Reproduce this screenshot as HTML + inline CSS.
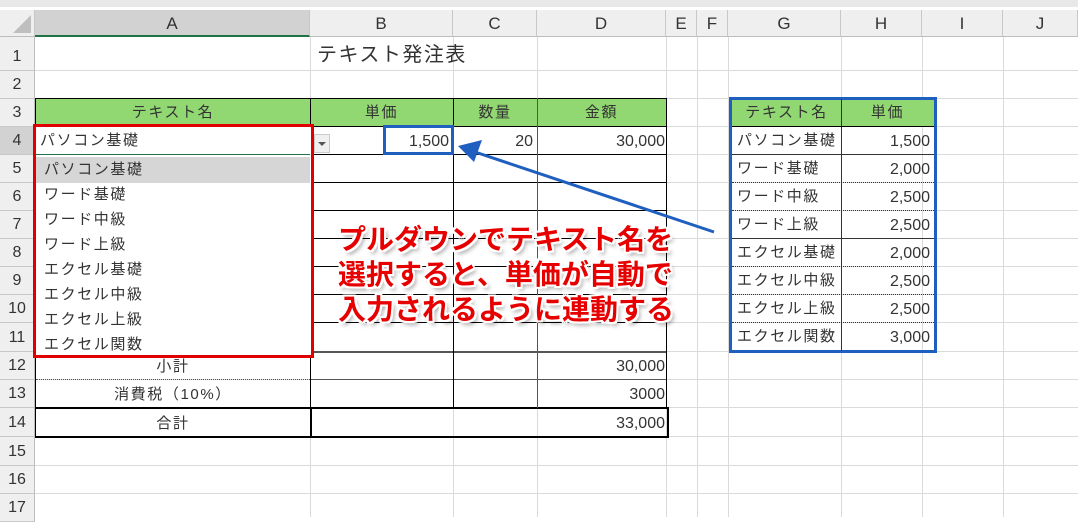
<!DOCTYPE html>
<html><head><meta charset="utf-8"><style>
*{margin:0;padding:0;box-sizing:border-box}
body{width:1078px;height:517px;overflow:hidden;background:#fff;position:relative;font-family:"Liberation Sans","Noto Sans CJK JP",sans-serif;color:#333}
.a{position:absolute}
.h{position:absolute;height:1px;background:#dadada}
.v{position:absolute;width:1px;background:#dadada}
.ch{position:absolute;top:10px;height:27px;background:#efefef;border-right:1px solid #c8c8c8;border-bottom:1px solid #bdbdbd;font-size:17px;color:#333;text-align:center;line-height:27px}
.rh{position:absolute;left:0;width:35px;background:#efefef;border-bottom:1px solid #c8c8c8;border-right:1px solid #bdbdbd;font-size:16px;text-align:center;color:#333}
.t{position:absolute;font-size:15px;line-height:20px;white-space:nowrap;color:#333}
.j{letter-spacing:1.6px}
.bk{position:absolute;background:#000}
.g{position:absolute;background:#92d872}
.it{position:absolute;left:44px;font-size:15px;line-height:20px;letter-spacing:1.6px;color:#333}
.call{position:absolute;left:338px;font-size:28px;font-weight:bold;color:#e60000;white-space:nowrap;
text-shadow:-2px -2px 0 #fff,2px -2px 0 #fff,-2px 2px 0 #fff,2px 2px 0 #fff,0 2px 0 #fff,0 -2px 0 #fff,2px 0 0 #fff,-2px 0 0 #fff,3px 4px 4px rgba(0,0,0,.35)}
</style></head><body>
<div class="a" style="left:0;top:0;width:1078px;height:7px;background:#e8e8e8"></div>
<div class="h" style="left:35px;top:70px;width:1043px"></div>
<div class="h" style="left:35px;top:98px;width:1043px"></div>
<div class="h" style="left:35px;top:126px;width:1043px"></div>
<div class="h" style="left:35px;top:154px;width:1043px"></div>
<div class="h" style="left:35px;top:182px;width:1043px"></div>
<div class="h" style="left:35px;top:210px;width:1043px"></div>
<div class="h" style="left:35px;top:238px;width:1043px"></div>
<div class="h" style="left:35px;top:266px;width:1043px"></div>
<div class="h" style="left:35px;top:294px;width:1043px"></div>
<div class="h" style="left:35px;top:322px;width:1043px"></div>
<div class="h" style="left:35px;top:351px;width:1043px"></div>
<div class="h" style="left:35px;top:379px;width:1043px"></div>
<div class="h" style="left:35px;top:407px;width:1043px"></div>
<div class="h" style="left:35px;top:436px;width:1043px"></div>
<div class="h" style="left:35px;top:465px;width:1043px"></div>
<div class="h" style="left:35px;top:493px;width:1043px"></div>
<div class="v" style="left:310px;top:37px;height:480px"></div>
<div class="v" style="left:453px;top:37px;height:480px"></div>
<div class="v" style="left:537px;top:37px;height:480px"></div>
<div class="v" style="left:666px;top:37px;height:480px"></div>
<div class="v" style="left:697px;top:37px;height:480px"></div>
<div class="v" style="left:728px;top:37px;height:480px"></div>
<div class="v" style="left:841px;top:37px;height:480px"></div>
<div class="v" style="left:922px;top:37px;height:480px"></div>
<div class="v" style="left:1003px;top:37px;height:480px"></div>
<div class="ch" style="left:0;width:35px"><div class="a" style="right:3px;bottom:3px;width:0;height:0;border-left:18px solid transparent;border-bottom:18px solid #bfbfbf"></div></div>
<div class="ch" style="left:35px;width:275px;background:#d2d2d2;border-bottom:2px solid #217346">A</div>
<div class="ch" style="left:310px;width:143px">B</div>
<div class="ch" style="left:453px;width:84px">C</div>
<div class="ch" style="left:537px;width:129px">D</div>
<div class="ch" style="left:666px;width:31px">E</div>
<div class="ch" style="left:697px;width:31px">F</div>
<div class="ch" style="left:728px;width:113px">G</div>
<div class="ch" style="left:841px;width:81px">H</div>
<div class="ch" style="left:922px;width:81px">I</div>
<div class="ch" style="left:1003px;width:75px">J</div>
<div class="rh" style="top:37px;height:34px;line-height:40px">1</div>
<div class="rh" style="top:71px;height:28px;line-height:28px">2</div>
<div class="rh" style="top:99px;height:28px;line-height:28px">3</div>
<div class="rh" style="top:127px;height:28px;line-height:28px;background:#d2d2d2">4</div>
<div class="rh" style="top:155px;height:28px;line-height:28px">5</div>
<div class="rh" style="top:183px;height:28px;line-height:28px">6</div>
<div class="rh" style="top:211px;height:28px;line-height:28px">7</div>
<div class="rh" style="top:239px;height:28px;line-height:28px">8</div>
<div class="rh" style="top:267px;height:28px;line-height:28px">9</div>
<div class="rh" style="top:295px;height:28px;line-height:28px">10</div>
<div class="rh" style="top:323px;height:29px;line-height:29px">11</div>
<div class="rh" style="top:352px;height:28px;line-height:28px">12</div>
<div class="rh" style="top:380px;height:28px;line-height:28px">13</div>
<div class="rh" style="top:408px;height:29px;line-height:29px">14</div>
<div class="rh" style="top:437px;height:29px;line-height:29px">15</div>
<div class="rh" style="top:466px;height:28px;line-height:28px">16</div>
<div class="rh" style="top:494px;height:28px;line-height:28px">17</div>
<div class="t j" style="left:317px;top:43px;font-size:20px;line-height:24px;letter-spacing:1.5px">テキスト発注表</div>
<div class="g" style="left:36px;top:99px;width:630px;height:28px"></div>
<div class="t j" style="left:36px;width:274px;top:103px;text-align:center">テキスト名</div>
<div class="t j" style="left:310px;width:143px;top:103px;text-align:center">単価</div>
<div class="t j" style="left:453px;width:84px;top:103px;text-align:center">数量</div>
<div class="t j" style="left:537px;width:129px;top:103px;text-align:center">金額</div>
<div class="bk" style="left:35px;top:98px;width:632px;height:1px"></div>
<div class="bk" style="left:35px;top:126px;width:632px;height:1px"></div>
<div class="bk" style="left:35px;top:154px;width:632px;height:1px"></div>
<div class="bk" style="left:310px;top:182px;width:357px;height:1px"></div>
<div class="bk" style="left:310px;top:210px;width:357px;height:1px"></div>
<div class="bk" style="left:310px;top:238px;width:357px;height:1px"></div>
<div class="bk" style="left:310px;top:266px;width:357px;height:1px"></div>
<div class="bk" style="left:310px;top:294px;width:357px;height:1px"></div>
<div class="bk" style="left:310px;top:322px;width:357px;height:1px"></div>
<div class="bk" style="left:35px;top:351px;width:632px;height:2px;background:#555"></div>
<div class="a" style="left:36px;top:379px;width:274px;height:0;border-top:1px dotted #555"></div>
<div class="bk" style="left:310px;top:379px;width:357px;height:1px;background:#555"></div>
<div class="bk" style="left:35px;top:407px;width:634px;height:2px"></div>
<div class="bk" style="left:35px;top:436px;width:634px;height:2px"></div>
<div class="bk" style="left:35px;top:98px;width:1px;height:340px"></div>
<div class="bk" style="left:310px;top:98px;width:1px;height:340px"></div>
<div class="bk" style="left:310px;top:408px;width:2px;height:30px"></div>
<div class="bk" style="left:453px;top:98px;width:1px;height:310px"></div>
<div class="bk" style="left:537px;top:98px;width:1px;height:310px;background:#555"></div>
<div class="bk" style="left:666px;top:98px;width:1px;height:310px"></div>
<div class="bk" style="left:667px;top:408px;width:2px;height:30px"></div>
<div class="t" style="left:453px;width:80px;top:132px;text-align:right;font-size:16px">20</div>
<div class="t" style="left:537px;width:128px;top:132px;text-align:right;font-size:16px">30,000</div>
<div class="t j" style="left:36px;width:274px;top:357px;text-align:center">小計</div>
<div class="t" style="left:537px;width:128px;top:357px;text-align:right;font-size:16px">30,000</div>
<div class="t j" style="left:36px;width:274px;top:385px;text-align:center">消費税（10%）</div>
<div class="t" style="left:537px;width:128px;top:385px;text-align:right;font-size:16px">3000</div>
<div class="t j" style="left:36px;width:274px;top:414px;text-align:center">合計</div>
<div class="t" style="left:537px;width:128px;top:414px;text-align:right;font-size:16px">33,000</div>
<div class="a" style="left:383px;top:125px;width:71px;height:30px;border:3px solid #1f5fbf;background:#fff"></div>
<div class="t" style="left:383px;width:66px;top:132px;text-align:right;font-size:16px">1,500</div>
<div class="a" style="left:33px;top:124px;width:281px;height:234px;border:3px solid #e00000;background:#fff"></div>
<div class="a" style="left:36px;top:154px;width:274px;height:1px;background:#217346"></div>
<div class="t j" style="left:40px;top:131px">パソコン基礎</div>
<div class="a" style="left:36px;top:157px;width:274px;height:26px;background:#d6d6d6"></div>
<div class="it" style="top:160px">パソコン基礎</div>
<div class="it" style="top:185px">ワード基礎</div>
<div class="it" style="top:210px">ワード中級</div>
<div class="it" style="top:235px">ワード上級</div>
<div class="it" style="top:260px">エクセル基礎</div>
<div class="it" style="top:285px">エクセル中級</div>
<div class="it" style="top:310px">エクセル上級</div>
<div class="it" style="top:335px">エクセル関数</div>
<div class="a" style="left:314px;top:134px;width:16px;height:19px;background:#f0f0f0;border:1px solid #ccc"></div>
<div class="a" style="left:318px;top:142px;width:0;height:0;border-left:4px solid transparent;border-right:4px solid transparent;border-top:4px solid #555"></div>
<div class="g" style="left:731px;top:100px;width:204px;height:27px"></div>
<div class="a" style="left:729px;top:97px;width:208px;height:256px;border:3px solid #1f5fbf"></div>
<div class="bk" style="left:841px;top:99px;width:1px;height:252px;background:#333"></div>
<div class="bk" style="left:732px;top:126px;width:202px;height:1px"></div>
<div class="a" style="left:732px;top:154px;width:202px;border-top:1px solid #333"></div>
<div class="a" style="left:732px;top:182px;width:202px;border-top:1px dotted #333"></div>
<div class="a" style="left:732px;top:210px;width:202px;border-top:1px dotted #333"></div>
<div class="a" style="left:732px;top:238px;width:202px;border-top:1px solid #333"></div>
<div class="a" style="left:732px;top:266px;width:202px;border-top:1px dotted #333"></div>
<div class="a" style="left:732px;top:294px;width:202px;border-top:1px dotted #333"></div>
<div class="a" style="left:732px;top:322px;width:202px;border-top:1px dotted #333"></div>
<div class="t j" style="left:732px;width:109px;top:103px;text-align:center">テキスト名</div>
<div class="t j" style="left:841px;width:93px;top:103px;text-align:center">単価</div>
<div class="t j" style="left:737px;top:131px">パソコン基礎</div><div class="t" style="left:841px;width:89px;top:132px;text-align:right;font-size:16px">1,500</div>
<div class="t j" style="left:737px;top:159px">ワード基礎</div><div class="t" style="left:841px;width:89px;top:160px;text-align:right;font-size:16px">2,000</div>
<div class="t j" style="left:737px;top:187px">ワード中級</div><div class="t" style="left:841px;width:89px;top:188px;text-align:right;font-size:16px">2,500</div>
<div class="t j" style="left:737px;top:215px">ワード上級</div><div class="t" style="left:841px;width:89px;top:216px;text-align:right;font-size:16px">2,500</div>
<div class="t j" style="left:737px;top:243px">エクセル基礎</div><div class="t" style="left:841px;width:89px;top:244px;text-align:right;font-size:16px">2,000</div>
<div class="t j" style="left:737px;top:271px">エクセル中級</div><div class="t" style="left:841px;width:89px;top:272px;text-align:right;font-size:16px">2,500</div>
<div class="t j" style="left:737px;top:299px">エクセル上級</div><div class="t" style="left:841px;width:89px;top:300px;text-align:right;font-size:16px">2,500</div>
<div class="t j" style="left:737px;top:327px">エクセル関数</div><div class="t" style="left:841px;width:89px;top:328px;text-align:right;font-size:16px">3,000</div>
<svg class="a" style="left:0;top:0" width="1078" height="517">
<line x1="714" y1="232" x2="472" y2="151" stroke="#1f5fbf" stroke-width="3"/>
<polygon points="458,146 482,140 474,162" fill="#1f5fbf"/>
</svg>
<div class="call" style="top:218px">プルダウンでテキスト名を</div>
<div class="call" style="top:253px">選択すると、単価が自動で</div>
<div class="call" style="top:288px">入力されるように連動する</div>
</body></html>
